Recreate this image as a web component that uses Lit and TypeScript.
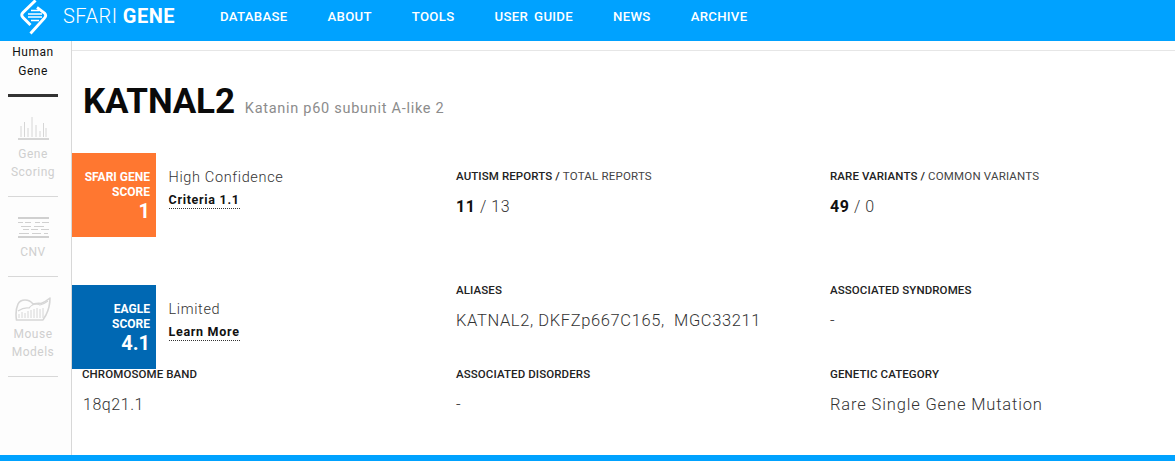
import { LitElement, html, css, svg } from "lit";
import { customElement } from "lit/decorators.js";

const NAV = ["DATABASE", "ABOUT", "TOOLS", "USER GUIDE", "NEWS", "ARCHIVE"];

const logo = svg`<svg width="38" height="36" viewBox="0 0 38 36" fill="none" stroke="#fff">
  <path d="M21.5 0.5 L9 12.5 Q6.5 15 9 17.5 L16.5 25" stroke-width="3" />
  <path d="M23 7.5 L30.5 13 Q33 15.5 30.5 18 L16.5 33.5" stroke-width="2.8"/>
  <path d="M17 10.5 H25 M14 14 H28 M14 17 H28 M17 20.5 H25" stroke-width="1.5"/>
</svg>`;

const scoring = svg`<svg width="32" height="24" viewBox="0 0 32 24" fill="none" stroke="#d6d6d6">
  <path d="M4 21V10 M7.5 21V6 M11 21V12 M15 21V1 M19 21V9 M23 21V15 M26.5 21V7 M29 21V12" stroke-width="1"/>
  <path d="M1 23H32" stroke-width="2"/>
</svg>`;

const cnv = svg`<svg width="32" height="21" viewBox="0 0 32 21" fill="none" stroke="#d0d0d0">
  <path d="M1 1H32 M1 20H32" stroke-width="2"/>
  <path d="M1 5.5H6 M8 5.5H14 M18 5.5H23 M25 5.5H32 M4 9.5H14 M17 9.5H27 M6 12.5H12 M14 12.5H21 M24 12.5H32 M2 16.5H12 M15 16.5H24 M27 16.5H31" stroke-width="1"/>
</svg>`;

const mouse = svg`<svg width="36" height="24" viewBox="0 0 36 24" fill="none" stroke="#d6d6d6">
  <path d="M1.5 23 Q0 14 3 7 Q5 3 10 3 Q15 3 18 7 Q23 6 26 6.5 Q30 5 35 1 Q35 10 31 18 Q29 21 28 23 Z" stroke-width="1.6" stroke-linejoin="round"/>
  <path d="M4 21V17 M7 21V15 M10 21V16 M13 21V14 M16 21V13 M19 21V12 M22 21V11 M25 21V12 M28 21V11" stroke-width="1"/>
  <path d="M3 14 Q9 10 14 11 Q19 5 25 8 Q29 7 33 4" stroke-width="1.2"/>
</svg>`;

@customElement("app-root")
export class AppRoot extends LitElement {
  static styles = css`
    :host {
      display: flex;
      flex-direction: column;
      height: 461px;
      width: 1175px;
      overflow: hidden;
      background: #fff;
      font-family: "Roboto", "Liberation Sans", sans-serif;
      color: #222;
    }
    .header {
      height: 41px;
      flex: none;
      background: #00a2ff;
      display: flex;
      align-items: flex-start;
      color: #fff;
    }
    .logo {
      display: block;
      margin: 0 0 0 14px;
      width: 38px;
      height: 36px;
    }
    .brand {
      margin: 5px 0 0 11px;
      width: 157px;
      font-size: 20px;
      line-height: 22px;
      font-weight: 300;
      letter-spacing: 0.5px;
      white-space: nowrap;
    }
    .brand b { font-weight: 700; }
    .nav {
      display: flex;
      gap: 40px;
      font-size: 13.2px;
      line-height: 16px;
      font-weight: 500;
      letter-spacing: 0.3px;
      word-spacing: 2.5px;
      margin-top: 9px;
    }
    .body {
      flex: 1;
      display: flex;
      min-height: 0;
    }
    .side {
      width: 63px;
      flex: none;
      background: #fdfdfd;
      border-right: 1px solid #d8d8d8;
      display: flex;
      flex-direction: column;
      align-items: flex-start;
      padding-left: 8px;
      box-sizing: content-box;
    }
    .side-item {
      width: 50px;
      display: flex;
      flex-direction: column;
      align-items: center;
      border-bottom: 1px solid #d8d8d8;
      font-size: 12px;
      line-height: 18px;
      color: #cfcfcf;
      text-align: center;
      letter-spacing: 0.5px;
      box-sizing: border-box;
      white-space: nowrap;
    }
    .side-item svg { display: block; }
    .side-item.active {
      color: #111;
      border-bottom: 3px solid #333;
      height: 56px;
      padding-top: 2px;
      line-height: 18.5px;
    }
    .s1 { height: 100px; padding-top: 19px; }
    .s1 svg { margin-bottom: 5px; }
    .s2 { height: 80px; padding-top: 20px; }
    .s2 svg { margin-bottom: 5px; }
    .s3 { height: 100px; padding-top: 20px; }
    .s3 svg { margin-bottom: 4px; }
    .main {
      flex: 1;
      min-width: 0;
    }
    .topline {
      height: 9px;
      border-bottom: 1px solid #e6e6e6;
    }
    .title {
      display: flex;
      align-items: flex-start;
      gap: 10px;
      padding: 30px 0 0 11px;
      height: 72px;
      box-sizing: border-box;
    }
    .title h1 {
      margin: 0;
      font-size: 35px;
      line-height: 42px;
      font-weight: 700;
      color: #0a0a0a;
      letter-spacing: -0.15px;
    }
    .title span {
      margin-top: 19px;
      font-size: 14.5px;
      line-height: 18px;
      color: #8c8c8c;
      letter-spacing: 0.72px;
    }
    .grid {
      display: grid;
      grid-template-columns: 384px 374px 1fr;
      grid-template-rows: 132px 84px 70px;
      margin-top: 30px;
    }
    .score {
      display: flex;
      align-items: flex-start;
    }
    .box {
      width: 84px;
      height: 84px;
      box-sizing: border-box;
      color: #fff;
      text-align: right;
      padding: 17px 6px 0 0;
      font-size: 12px;
      line-height: 15px;
      font-weight: 700;
      flex: none;
    }
    .box strong {
      display: block;
      font-size: 20px;
      line-height: 22px;
      font-weight: 700;
    }
    .orange { background: #ff7730; }
    .blue { background: #0068b3; }
    .conf {
      margin: 16px 0 0 12.5px;
      font-size: 14.5px;
      line-height: 18px;
      font-weight: 300;
      letter-spacing: 0.65px;
      color: #333;
    }
    .conf a {
      display: table;
      margin-top: 5px;
      font-size: 12.5px;
      line-height: 15px;
      padding-bottom: 1px;
      font-weight: 700;
      color: #111;
      letter-spacing: 0.7px;
      border-bottom: 1px dotted #333;
    }
    .cell .label {
      font-size: 11.5px;
      line-height: 14px;
      font-weight: 500;
      color: #222;
      letter-spacing: 0.1px;
    }
    .label i {
      font-style: normal;
      font-weight: 400;
      color: #444;
      letter-spacing: 0.2px;
    }
    .value {
      margin-top: 14px;
      font-size: 16px;
      line-height: 20px;
      font-weight: 300;
      color: #333;
      letter-spacing: 0.55px;
    }
    .value b {
      font-weight: 700;
      color: #111;
    }
    .value.alias {
      font-size: 16.5px;
      letter-spacing: 0.62px;
    }
    .value.text {
      font-size: 16.5px;
      letter-spacing: 0.85px;
    }
    .r1 { padding-top: 16px; }
    .r2 { margin-top: -2px; }
    .r3 { margin-top: -2px; }
    .first { padding-left: 10px; }
    .first .value { padding-left: 1px; }
    .footer {
      height: 6px;
      flex: none;
      background: #00a2ff;
    }
  `;

  render() {
    return html`
      <div class="header">
        <span class="logo">${logo}</span>
        <div class="brand">SFARI <b>GENE</b></div>
        <nav class="nav">${NAV.map((n) => html`<span>${n}</span>`)}</nav>
      </div>
      <div class="body">
        <aside class="side">
          <div class="side-item active">Human<br />Gene</div>
          <div class="side-item s1">${scoring}Gene<br />Scoring</div>
          <div class="side-item s2">${cnv}CNV</div>
          <div class="side-item s3">${mouse}Mouse<br />Models</div>
        </aside>
        <main class="main">
          <div class="topline"></div>
          <div class="title">
            <h1>KATNAL2</h1>
            <span>Katanin p60 subunit A-like 2</span>
          </div>
          <div class="grid">
            <div class="score">
              <div class="box orange">SFARI GENE<br />SCORE<strong>1</strong></div>
              <div class="conf">High Confidence<a>Criteria 1.1</a></div>
            </div>
            <div class="cell r1">
              <div class="label">AUTISM REPORTS / <i>TOTAL REPORTS</i></div>
              <div class="value"><b>11</b> / 13</div>
            </div>
            <div class="cell r1">
              <div class="label">RARE VARIANTS / <i>COMMON VARIANTS</i></div>
              <div class="value"><b>49</b> / 0</div>
            </div>

            <div class="score">
              <div class="box blue">EAGLE<br />SCORE<strong>4.1</strong></div>
              <div class="conf">Limited<a>Learn More</a></div>
            </div>
            <div class="cell r2">
              <div class="label">ALIASES</div>
              <div class="value alias">KATNAL2, DKFZp667C165,&nbsp; MGC33211</div>
            </div>
            <div class="cell r2">
              <div class="label">ASSOCIATED SYNDROMES</div>
              <div class="value">-</div>
            </div>

            <div class="cell r3 first">
              <div class="label">CHROMOSOME BAND</div>
              <div class="value">18q21.1</div>
            </div>
            <div class="cell r3">
              <div class="label">ASSOCIATED DISORDERS</div>
              <div class="value">-</div>
            </div>
            <div class="cell r3">
              <div class="label">GENETIC CATEGORY</div>
              <div class="value text">Rare Single Gene Mutation</div>
            </div>
          </div>
        </main>
      </div>
      <div class="footer"></div>
    `;
  }
}
